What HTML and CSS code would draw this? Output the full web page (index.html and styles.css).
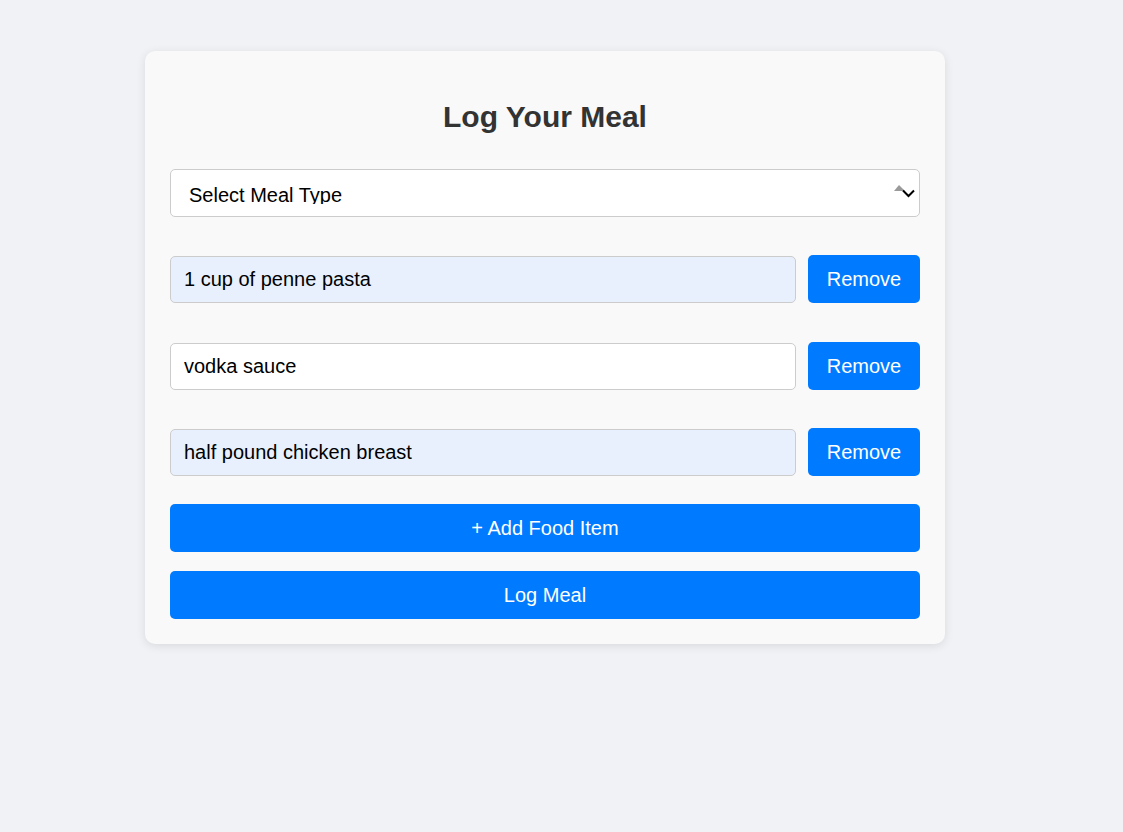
FILE: index.html
```html
<!DOCTYPE html>
<html lang="en">
<head>
<meta charset="utf-8">
<title>Log Your Meal</title>
<link rel="stylesheet" href="styles.css">
</head>
<body>
<div class="card">
  <h2 class="title">Log Your Meal</h2>
  <div class="select-wrap">
    <select class="meal-select">
      <option>Select Meal Type</option>
      <option>Breakfast</option>
      <option>Lunch</option>
      <option>Dinner</option>
      <option>Snack</option>
    </select>
    <svg class="select-icon" width="24" height="16" viewBox="0 0 24 16">
      <polygon points="0,7 5,1 11,7" fill="#9a9a9a"/>
      <polyline points="9,6.5 14.5,12 20,6.5" fill="none" stroke="#000" stroke-width="2"/>
    </svg>
  </div>
  <div class="food-row first">
    <input class="food-input filled" type="text" value="1 cup of penne pasta">
    <button class="btn remove">Remove</button>
  </div>
  <div class="food-row">
    <input class="food-input" type="text" value="vodka sauce">
    <button class="btn remove">Remove</button>
  </div>
  <div class="food-row last">
    <input class="food-input filled" type="text" value="half pound chicken breast">
    <button class="btn remove">Remove</button>
  </div>
  <button class="btn wide add">+ Add Food Item</button>
  <button class="btn wide log">Log Meal</button>
</div>
</body>
</html>
```

FILE: styles.css
```css
* { box-sizing: border-box; }
html, body { margin: 0; padding: 0; }
body {
  background: #f0f2f5;
  font-family: "Liberation Sans", Arial, sans-serif;
  font-size: 20px;
  min-height: 832px;
}
.card {
  width: 800px;
  margin: 51px 0 0 145px;
  padding: 25px;
  background: #f9f9f9;
  border-radius: 10px;
  box-shadow: 0 2px 10px rgba(0, 0, 0, 0.1);
  display: flex;
  flex-direction: column;
}
.title {
  margin: 24px 0 35px;
  font-size: 30px;
  line-height: 34px;
  font-weight: bold;
  color: #333;
  text-align: center;
}
.select-wrap {
  position: relative;
  height: 48px;
  margin-bottom: 38px;
}
.meal-select {
  -webkit-appearance: none;
  appearance: none;
  width: 100%;
  height: 48px;
  padding: 14px 18px 12px;
  border: 1px solid #ccc;
  border-radius: 5px;
  background: #fff;
  font-family: "Liberation Sans", Arial, sans-serif;
  font-size: 20px;
  color: #000;
  outline: none;
}
.select-icon {
  position: absolute;
  left: 724px;
  top: 15px;
  pointer-events: none;
}
.food-row {
  display: flex;
  align-items: center;
  gap: 12px;
  height: 48px;
  margin-bottom: 38px;
}
.food-row.first { margin-bottom: 39px; }
.food-row.last { margin-bottom: 28px; }
.food-input {
  flex: 1;
  height: 47px;
  padding: 0 13px;
  border: 1px solid #ccc;
  border-radius: 5px;
  background: #fff;
  font-family: "Liberation Sans", Arial, sans-serif;
  font-size: 20px;
  color: #000;
  outline: none;
}
.food-input.filled { background: #e8f0fe; }
.btn {
  height: 48px;
  border: none;
  border-radius: 5px;
  background: #007bff;
  color: #fff;
  font-family: "Liberation Sans", Arial, sans-serif;
  font-size: 20px;
  cursor: pointer;
}
.remove {
  width: 112px;
  flex: none;
}
.wide { width: 100%; }
.add { margin-bottom: 19px; }
```
